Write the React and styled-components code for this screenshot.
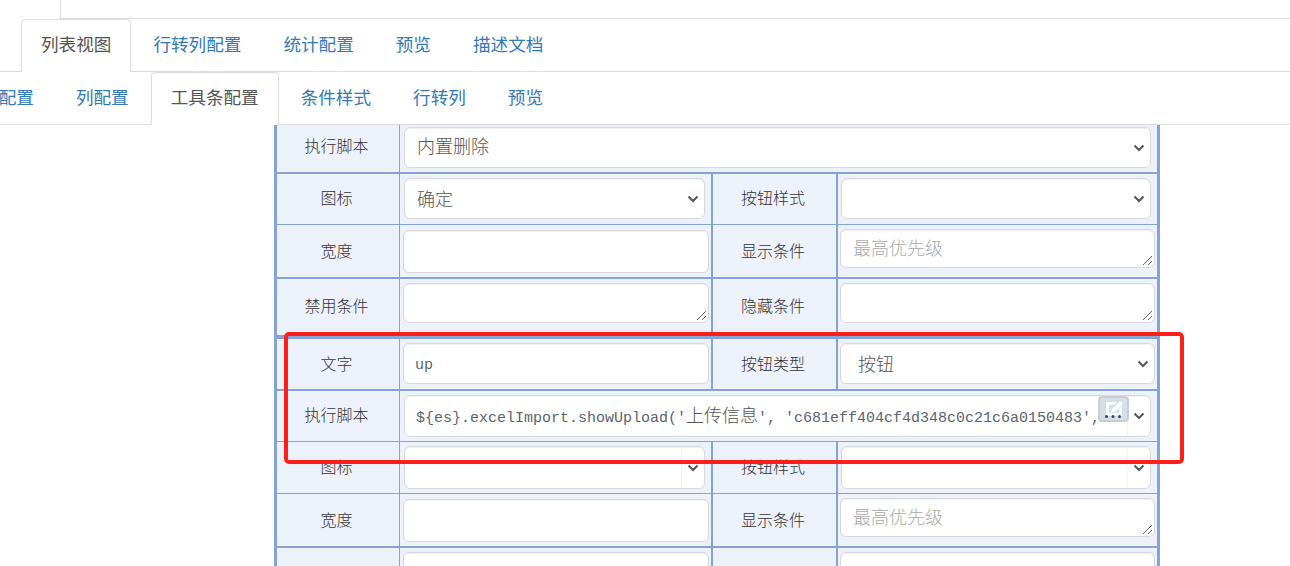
import React from "react";
import styled, { createGlobalStyle } from "styled-components";

const Global = createGlobalStyle`
  html, body { margin: 0; padding: 0; background: #fff; overflow: hidden; }
  body { font-family: "Noto Sans CJK SC", "Liberation Sans", sans-serif; color: #333; }
`;
const Page = styled.div`
  position: relative;
  width: 1290px;
  height: 566px;
  overflow: hidden;
`;
const TopStrip = styled.div`
  height: 18px;
  margin-left: 60px;
  border-left: 1px solid #ddd;
  border-bottom: 1px solid #ddd;
`;
const TabBar = styled.div`
  display: flex;
  height: 52px;
  padding-left: ${p => p.$start}px;
  border-bottom: 1px solid #ddd;
  margin-left: ${p => p.$shift || 0}px;
  box-sizing: content-box;
`;
const Tab = styled.div`
  display: flex;
  align-items: center;
  box-sizing: border-box;
  height: ${p => (p.$active ? 53 : 52)}px;
  padding: 0 19px 4px;
  margin-right: 2px;
  font-size: 17.6px;
  white-space: nowrap;
  color: ${p => (p.$active ? "#555" : "#337ab7")};
  background: ${p => (p.$active ? "#fff" : "transparent")};
  border: 1px solid ${p => (p.$active ? "#ddd" : "transparent")};
  border-bottom-color: ${p => (p.$active ? "#fff" : "transparent")};
  border-radius: 4px 4px 0 0;
`;
const Sheet = styled.div`
  width: 886px;
  margin-left: 274px;
  box-sizing: border-box;
  background: #edf1fa;
  border-left: 3px solid #85a3d4;
  border-right: 3px solid #85a3d4;
`;
const Row = styled.div`
  display: grid;
  grid-template-columns: 123px 313px 125px 319px;
  box-sizing: border-box;
  height: ${p => p.$h}px;
  border-bottom: ${p => p.$line}px solid #85a3d4;
`;
const Label = styled.div`
  display: flex;
  align-items: center;
  justify-content: center;
  padding-bottom: ${p => p.$lift ?? 4}px;
  padding-right: 3px;
  border-right: ${p => (p.$heavy ? 2 : 1)}px solid #85a3d4;
  font-size: 16px;
  font-weight: 300;
  color: #333;
`;
const Cell = styled.div`
  min-width: 0;
  box-sizing: border-box;
  padding-top: ${p => p.$top}px;
  padding-left: ${p => p.$left}px;
  padding-right: ${p => p.$right}px;
  grid-column: ${p => (p.$span ? "span 3" : "auto")};
  border-right: ${p => (p.$end ? 2 : 0)}px solid #85a3d4;
`;
const Field = styled.div`
  position: relative;
  display: flex;
  align-items: ${p => (p.$area ? "flex-start" : "center")};
  box-sizing: border-box;
  height: ${p => p.$h}px;
  padding: ${p => (p.$area ? "4px 12px" : `0 0 ${p.$lift ?? 2}px ${p.$indent || 12}px`)};
  background: #fff;
  border: 1px solid #d8d8dc;
  border-radius: 6px;
  box-shadow: inset 0 1px 1px rgba(0, 0, 0, 0.06);
  font-size: 18px;
  font-weight: 300;
  color: #555;
  white-space: nowrap;
  overflow: hidden;
`;
const Placeholder = styled.span`
  color: #aaa;
`;
const Code = styled.span`
  position: relative;
  top: ${p => p.$drop}px;
  margin-left: -1px;
  font-family: "Liberation Mono", "Noto Sans CJK SC", monospace;
  font-size: 15px;
  color: #5a6570;
`;
const Han = styled.span`
  font-family: "Noto Sans CJK SC", sans-serif;
  font-size: 18px;
  color: #555;
`;
const Chevron = styled.svg`
  position: absolute;
  right: 5px;
  top: 50%;
  margin-top: -4px;
  width: 12px;
  height: 8px;
`;
const Seam = styled.i`
  position: absolute;
  top: 0;
  bottom: 0;
  right: 22px;
  width: 1px;
  background: #f4f4f4;
`;
const Grip = styled.svg`
  position: absolute;
  right: 1px;
  bottom: 1px;
  width: 11px;
  height: 11px;
`;
const Callout = styled.div`
  position: absolute;
  left: 284px;
  top: 332px;
  width: 900px;
  height: 132px;
  box-sizing: border-box;
  border: 4px solid #ff1f1a;
  border-radius: 5px;
  pointer-events: none;
`;
const EditButton = styled.div`
  position: absolute;
  left: 1098px;
  top: 396px;
  width: 31px;
  height: 26px;
  box-sizing: border-box;
  background: #d4dfe9;
  border: 2px solid #c9cdd1;
  border-radius: 4px;
`;
const EditGlyph = styled.svg`
  display: block;
  width: 27px;
  height: 22px;
`;

const Arrow = () => (
  <Chevron viewBox="0 0 12 8">
    <path d="M1.5 1.5 6 6l4.5-4.5" fill="none" stroke="#555" strokeWidth="2" />
  </Chevron>
);
const Resize = () => (
  <Grip viewBox="0 0 11 11">
    <path d="M1 10 10 1M6 10l4-4" stroke="#666" strokeWidth="1" fill="none" />
  </Grip>
);

const Select = ({ h, children, seam, indent, lift }) => (
  <Field $h={h} $indent={indent} $lift={lift}>
    {children}
    {seam && <Seam />}
    <Arrow />
  </Field>
);
const TextInput = ({ h, children }) => <Field $h={h}>{children}</Field>;
const TextArea = ({ h, children }) => (
  <Field $h={h} $area>
    {children}
    <Resize />
  </Field>
);

const Left = ({ top, wide, children }) => (
  <Cell $top={top} $left={wide ? 3 : 4} $right={wide ? 2 : 6} $end>
    {children}
  </Cell>
);
const Right = ({ top, wide, children }) => (
  <Cell $top={top} $left={wide ? 2 : 3} $right={wide ? 2 : 6}>
    {children}
  </Cell>
);
const Full = ({ top, children }) => (
  <Cell $top={top} $left={4} $right={6} $span>
    {children}
  </Cell>
);

export default function App() {
  return (
    <Page>
      <Global />
      <TopStrip />
      <TabBar $start={21}>
        <Tab $active>列表视图</Tab>
        <Tab>行转列配置</Tab>
        <Tab>统计配置</Tab>
        <Tab>预览</Tab>
        <Tab>描述文档</Tab>
      </TabBar>
      <TabBar $start={0} $shift={-56.5}>
        <Tab>基础配置</Tab>
        <Tab>列配置</Tab>
        <Tab $active>工具条配置</Tab>
        <Tab>条件样式</Tab>
        <Tab>行转列</Tab>
        <Tab>预览</Tab>
      </TabBar>
      <Sheet>
        <Row $h={49} $line={2}>
          <Label $lift={7}>执行脚本</Label>
          <Full top={2}>
            <Select h={41} lift={6}>内置删除</Select>
          </Full>
        </Row>
        <Row $h={51} $line={1}>
          <Label>图标</Label>
          <Left top={4}>
            <Select h={41}>确定</Select>
          </Left>
          <Label $heavy>按钮样式</Label>
          <Right top={4}>
            <Select h={41} />
          </Right>
        </Row>
        <Row $h={54} $line={2}>
          <Label $lift={2}>宽度</Label>
          <Left top={5} wide>
            <TextInput h={43} />
          </Left>
          <Label $heavy $lift={2}>显示条件</Label>
          <Right top={4} wide>
            <TextArea h={39}>
              <Placeholder>最高优先级</Placeholder>
            </TextArea>
          </Right>
        </Row>
        <Row $h={60} $line={4}>
          <Label>禁用条件</Label>
          <Left top={4} wide>
            <TextArea h={40} />
          </Left>
          <Label $heavy>隐藏条件</Label>
          <Right top={4} wide>
            <TextArea h={40} />
          </Right>
        </Row>
        <Row $h={52} $line={2}>
          <Label $lift={2}>文字</Label>
          <Left top={4} wide>
            <TextInput h={41}>
              <Code $drop={3}>up</Code>
            </TextInput>
          </Left>
          <Label $heavy $lift={2}>按钮类型</Label>
          <Right top={4} wide>
            <Select h={41} indent={17}>按钮</Select>
          </Right>
        </Row>
        <Row $h={51} $line={1}>
          <Label>执行脚本</Label>
          <Full top={4}>
            <Select h={42} seam>
              <Code $drop={-1}>
                {"${es}.excelImport.showUpload('"}
                <Han>上传信息</Han>
                {"', 'c681eff404cf4d348c0c21c6a0150483',"}
              </Code>
            </Select>
          </Full>
        </Row>
        <Row $h={52} $line={1}>
          <Label>图标</Label>
          <Left top={4}>
            <Select h={43} seam />
          </Left>
          <Label $heavy>按钮样式</Label>
          <Right top={4}>
            <Select h={43} seam />
          </Right>
        </Row>
        <Row $h={54} $line={2}>
          <Label $lift={2}>宽度</Label>
          <Left top={5} wide>
            <TextInput h={43} />
          </Left>
          <Label $heavy $lift={2}>显示条件</Label>
          <Right top={4} wide>
            <TextArea h={39}>
              <Placeholder>最高优先级</Placeholder>
            </TextArea>
          </Right>
        </Row>
        <Row $h={52} $line={1}>
          <Label />
          <Left top={4} wide>
            <TextInput h={43} />
          </Left>
          <Label $heavy />
          <Right top={4} wide>
            <TextArea h={43} />
          </Right>
        </Row>
      </Sheet>
      <EditButton>
        <EditGlyph viewBox="0 0 27 22">
          <path d="M6 4h11l-3 3H9v8h10v-4l3-3v10H6z" fill="#fff" />
          <path d="M12 11 20 3l3 3-8 8-4 1z" fill="#fff" />
          <circle cx="6.5" cy="18.5" r="1.5" fill="#3f4650" />
          <circle cx="13" cy="18.5" r="1.5" fill="#3f4650" />
          <circle cx="19.5" cy="18.5" r="1.5" fill="#3f4650" />
        </EditGlyph>
      </EditButton>
      <Callout />
    </Page>
  );
}
